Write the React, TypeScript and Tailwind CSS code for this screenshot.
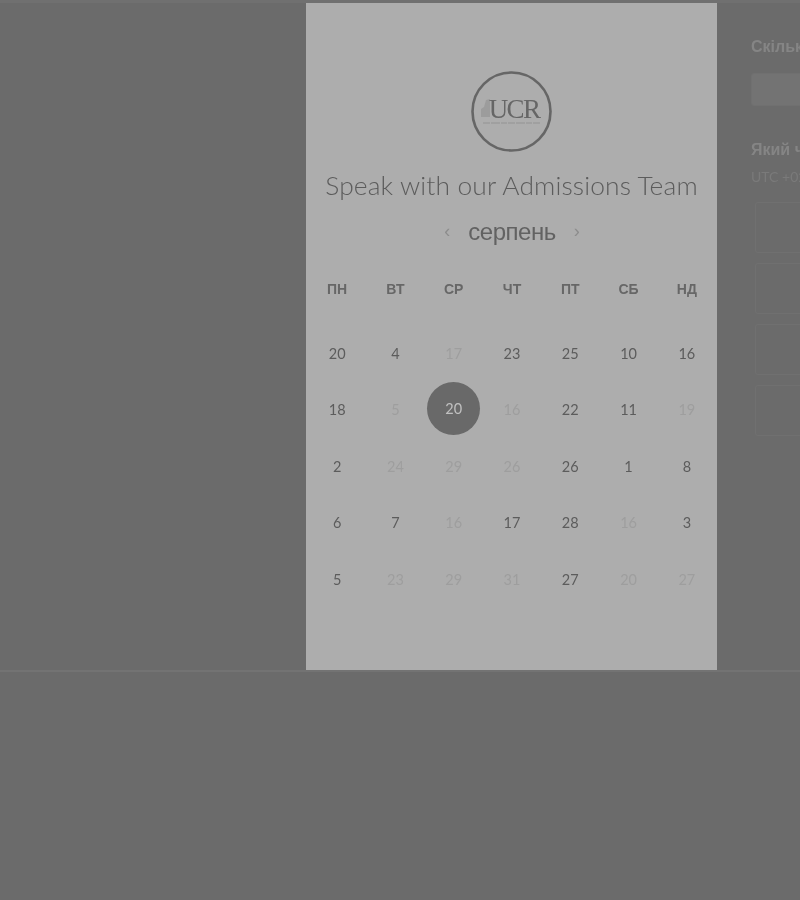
const weekdays = ['ПН', 'ВТ', 'СР', 'ЧТ', 'ПТ', 'СБ', 'НД']

// [day, active]
const weeks: [number, boolean][][] = [
  [[20, true], [4, true], [17, false], [23, true], [25, true], [10, true], [16, true]],
  [[18, true], [5, false], [20, true], [16, false], [22, true], [11, true], [19, false]],
  [[2, true], [24, false], [29, false], [26, false], [26, true], [1, true], [8, true]],
  [[6, true], [7, true], [16, false], [17, true], [28, true], [16, false], [3, true]],
  [[5, true], [23, false], [29, false], [31, false], [27, true], [20, false], [27, false]],
]

function Logo() {
  return (
    <svg width="81" height="81" viewBox="0 0 81 81" fill="none">
      <circle cx="40.5" cy="40.5" r="39" stroke="#666666" strokeWidth="2.6" />
      <path d="M10 46V38l3-2 2-7 4-1v18z" fill="#9c9c9c" />
      <text x="43" y="47" textAnchor="middle" fontFamily="'Liberation Serif', serif" fontSize="27" letterSpacing="-1.6" fill="#666666">
        UCR
      </text>
      <path d="M12 52H69" stroke="#949494" strokeWidth="1.2" strokeDasharray="7 1 9 1 6 1" />
    </svg>
  )
}

function CalendarPanel() {
  return (
    <div className="w-[411px] shrink-0 bg-[#adadad] pt-[68px]">
      <div className="flex justify-center">
        <Logo />
      </div>

      <h1 className="mt-[15px] text-center font-['Lato',sans-serif] text-[26.4px] leading-[36px] font-light tracking-[0.13px] text-[#5c5c5c]">
        Speak with our Admissions Team
      </h1>

      {/* month switcher */}
      <div className="mt-[11px] flex h-[36px] items-center justify-center gap-[18px] pl-[1px]">
        <span className="-mt-[2px] font-['Liberation_Sans',sans-serif] text-[18px] text-[#8c8c8c]">‹</span>
        <span className="font-['Liberation_Sans',sans-serif] text-[24px] tracking-[-0.5px] text-[#626262]">серпень</span>
        <span className="-mt-[2px] font-['Liberation_Sans',sans-serif] text-[18px] text-[#8c8c8c]">›</span>
      </div>

      <div className="mt-[29px] grid grid-cols-7 pl-[2px] pr-[1px]">
        {weekdays.map((day) => (
          <div key={day} className="h-[20px] text-center font-['Liberation_Sans',sans-serif] text-[14px] leading-[20px] font-bold text-[#676767]">
            {day}
          </div>
        ))}
      </div>

      <div className="mt-[26.5px] grid grid-cols-7 grid-rows-[repeat(5,56.5px)] pl-[2px] pr-[1px] font-['Lato',sans-serif] text-[14.5px]">
        {weeks.map((week, w) =>
          week.map(([day, active], d) => {
            const selected = w === 1 && d === 2
            return (
              <div key={`${w}-${d}`} className="flex items-center justify-center">
                {selected ? (
                  <span className="mb-[3px] flex h-[53px] w-[53px] items-center justify-center rounded-full bg-[#696969] text-[#c0c0c0]">
                    {day}
                  </span>
                ) : (
                  <span className={active ? 'text-[#5c5c5c]' : 'text-[#9e9e9e]'}>{day}</span>
                )}
              </div>
            )
          }),
        )}
      </div>
    </div>
  )
}

function SidePanel() {
  return (
    <div className="min-w-0 flex-1 overflow-hidden pl-[34px] pt-[34px] font-['Liberation_Sans',sans-serif] whitespace-nowrap">
      <p className="text-[16px] leading-[20px] font-bold text-[#858585]">Скільки часу вам потрібно?</p>
      <div className="mt-[16px] h-[33px] w-[300px] rounded-[3px] border border-[#707070] bg-[#737373]" />
      <p className="mt-[34px] text-[16px] leading-[20px] font-bold text-[#858585]">Який час вам підходить?</p>
      <p className="mt-[7px] font-['Lato',sans-serif] text-[14px] leading-[20px] text-[#7a7a7a]">UTC +02:00</p>
      <div className="mt-[15px] ml-[4px] flex w-[300px] flex-col gap-[10px]">
        {[0, 1, 2, 3].map((slot) => (
          <div key={slot} className="h-[51px] rounded-[3px] border border-[#707070]" />
        ))}
      </div>
    </div>
  )
}

export default function App() {
  return (
    <div className="h-[900px] w-[800px] overflow-hidden bg-[#6b6b6b] blur-[0.4px]">
      <div className="h-[3px] bg-[#707070]" />
      <div className="flex h-[667px]">
        <div className="w-[306px] shrink-0" />
        <CalendarPanel />
        <SidePanel />
      </div>
      <div className="h-[2px] bg-[#737373]" />
    </div>
  )
}
